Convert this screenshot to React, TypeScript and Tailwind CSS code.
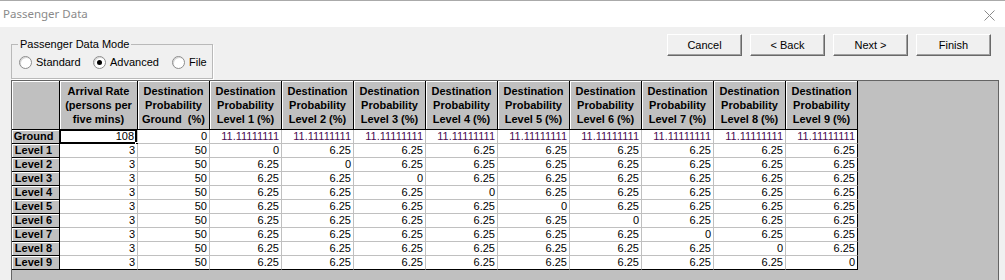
import { Fragment } from "react";

const LEVELS = ["Ground", "Level 1", "Level 2", "Level 3", "Level 4", "Level 5", "Level 6", "Level 7", "Level 8", "Level 9"];

const HEADERS = [
  "Arrival Rate\n(persons per\nfive mins)",
  "Destination\nProbability\nGround  (%)",
  ...Array.from({ length: 9 }, (_, i) => `Destination\nProbability\nLevel ${i + 1} (%)`),
];

// 各行のセル値：到着率 → 地上行き → 各階行き
function rowValues(r: number): string[] {
  const arrival = r === 0 ? "108" : "3";
  const ground = r === 0 ? "0" : "50";
  const levels = Array.from({ length: 9 }, (_, j) => {
    if (r === 0) return "11.11111111";
    return r === j + 1 ? "0" : "6.25";
  });
  return [arrival, ground, ...levels];
}

const ui = { fontFamily: '"Liberation Sans", Arial, sans-serif' };

function Radio({ label, checked, width }: { label: string; checked?: boolean; width: string }) {
  return (
    <div className={`flex items-center ${width}`}>
      <span className="w-[13px] h-[13px] rounded-full border border-[#8c8c8c] bg-white flex items-center justify-center shadow-[inset_1px_1px_0_#d6d6d6]">
        {checked && <span className="w-[5px] h-[5px] rounded-full bg-black" />}
      </span>
      <span className="ml-[4px] text-[11px] leading-[14px] text-black">{label}</span>
    </div>
  );
}

function WinButton({ children }: { children: string }) {
  return (
    <button className="w-[75px] h-[22px] bg-[#f0f0f0] border border-t-white border-l-white border-r-[#696969] border-b-[#696969] shadow-[inset_-1px_-1px_0_#a0a0a0] text-[11px] leading-[14px] text-black">
      {children}
    </button>
  );
}

export default function App() {
  return (
    <div className="w-[1005px] h-[280px] overflow-hidden bg-[#f0f0f0] flex flex-col" style={ui}>
      {/* タイトルバー */}
      <div className="h-[27px] shrink-0 bg-white border-t border-[#aaaaaa] flex items-center justify-between pl-[3px] pr-[10px]">
        <span className="text-[11.5px] text-[#8a8a8a]" style={{ fontFamily: '"Noto Sans", "Open Sans", sans-serif' }}>
          Passenger Data
        </span>
        <svg width="11" height="11" viewBox="0 0 11 11" className="mt-[3px]">
          <path d="M0.5 0.5 L10.5 10.5 M10.5 0.5 L0.5 10.5" stroke="#8a8a8a" strokeWidth="1" />
        </svg>
      </div>

      <div className="flex-1 flex flex-col pl-[11px] pr-[6px]">
        <div className="flex items-start justify-between">
          {/* グループボックス */}
          <div className="relative mt-[17px] w-[202px] h-[35px] border border-[#b9b9b9] shadow-[1px_1px_0_#fff]">
            <span className="absolute -top-[8px] left-[6px] px-[2px] bg-[#f0f0f0] text-[11px] leading-[14px] text-black">
              Passenger Data Mode
            </span>
            <div className="flex items-center pl-[7px] pt-[10px]">
              <Radio label="Standard" width="w-[74px]" />
              <Radio label="Advanced" checked width="w-[79px]" />
              <Radio label="File" width="w-[40px]" />
            </div>
          </div>

          <div className="flex gap-[8px] mt-[7px] mr-[8px]">
            <WinButton>Cancel</WinButton>
            <WinButton>&lt; Back</WinButton>
            <WinButton>Next &gt;</WinButton>
            <WinButton>Finish</WinButton>
          </div>
        </div>

        {/* データグリッド */}
        <div className="mt-[1px] h-[220px] shrink-0 border border-[#646464] bg-[#c0c0c0]">
          <div className="grid grid-cols-[48px_78px_repeat(10,72px)] text-[11px] text-black">
            <div className="h-[49px] border-r border-b border-black bg-[#c0c0c0] shadow-[inset_1px_1px_0_#fff]" />
            {HEADERS.map((h) => (
              <div
                key={h}
                className="h-[49px] border-r border-b border-black bg-[#c0c0c0] shadow-[inset_1px_1px_0_#fff] pt-[3px] text-center font-bold leading-[14px] whitespace-pre"
              >
                {h}
              </div>
            ))}

            {LEVELS.map((lv, r) => (
              <Fragment key={lv}>
                <div className="h-[14px] border-r border-b border-black bg-[#c0c0c0] shadow-[inset_1px_1px_0_#fff] text-center pr-[4px] font-bold leading-[13px]">
                  {lv}
                </div>
                {rowValues(r).map((v, c) => {
                  const lastCol = c === 10;
                  const lastRow = r === 9;
                  const selected = r === 0 && c === 0;
                  const purple = r === 0 && c >= 2;
                  return (
                    <div
                      key={c}
                      className={`relative h-[14px] bg-white border-r border-b text-right pr-[2px] leading-[13px] ${
                        lastCol ? "border-r-black" : "border-r-[#c0c0c0]"
                      } ${lastRow ? "border-b-black" : "border-b-[#c0c0c0]"} ${purple ? "text-[#4a0a52]" : "text-black"} ${
                        selected ? "pr-[3px]" : ""
                      }`}
                    >
                      {v}
                      {selected && (
                        <>
                          <span className="absolute -top-[1px] -left-[1px] right-0 bottom-[-1px] border-2 border-black" />
                          <span className="absolute -right-[3px] -bottom-[4px] w-[5px] h-[5px] bg-black border border-white" />
                        </>
                      )}
                    </div>
                  );
                })}
              </Fragment>
            ))}
          </div>
        </div>
      </div>
    </div>
  );
}
